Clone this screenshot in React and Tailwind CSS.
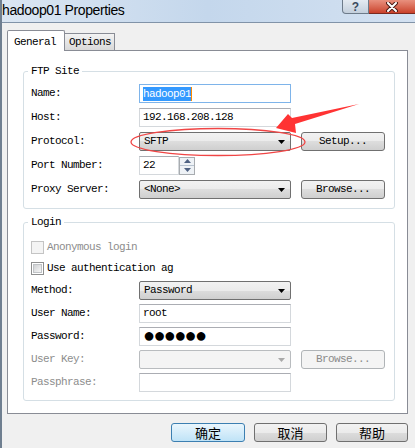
import React from "react";

// win7 style helpers
const mono = "font-['Liberation_Mono',monospace] text-[11px] tracking-[-0.6px]";

function Caret({ disabled }) {
  return (
    <svg width="7" height="4" viewBox="0 0 7 4">
      <path d="M0 0h7L3.5 4z" fill={disabled ? "#a9a9a9" : "#000"} />
    </svg>
  );
}

function Select({ value, disabled }) {
  return (
    <div
      className={
        disabled
          ? "flex items-center justify-between w-[152px] h-[19px] pl-[4px] pr-[5px] border border-[#b9bcbf] rounded-[2px] bg-[#f4f4f4]"
          : "flex items-center justify-between w-[152px] h-[19px] pl-[4px] pr-[5px] border border-[#707070] rounded-[2px] bg-[linear-gradient(#f2f2f2_0%,#ebebeb_50%,#dddddd_50%,#cfcfcf_100%)]"
      }
    >
      <span>{value}</span>
      <Caret disabled={disabled} />
    </div>
  );
}

function Input({ children, focused, w = "w-[152px]" }) {
  return (
    <div
      className={
        focused
          ? `flex items-center ${w} h-[19px] pl-[3px] border border-[#7eb4ea] bg-white`
          : `flex items-center ${w} h-[19px] pl-[3px] border border-[#d4d8dc] border-t-[#abadb3] bg-white`
      }
    >
      {children}
    </div>
  );
}

function Btn({ children, disabled }) {
  return (
    <div
      className={
        disabled
          ? "flex items-center justify-center w-[84px] h-[19px] ml-[10px] border border-[#b0b4b7] rounded-[3px] bg-[#f4f4f4] text-[#8a8a8a]"
          : "flex items-center justify-center w-[84px] h-[19px] ml-[10px] border border-[#707070] rounded-[3px] bg-[linear-gradient(#f2f2f2_0%,#ebebeb_50%,#dddddd_50%,#cfcfcf_100%)]"
      }
    >
      {children}
    </div>
  );
}

function Row({ label, disabled, children }) {
  return (
    <div className="flex items-center h-[19px]">
      <span className={disabled ? "w-[108px] text-[#8d8d8d]" : "w-[108px]"}>{label}</span>
      {children}
    </div>
  );
}

function Check({ label, disabled }) {
  return (
    <div className="flex items-center h-[19px] gap-[3px]">
      <span
        className={
          disabled
            ? "flex items-center justify-center w-[13px] h-[13px] border border-[#c4c4c4] bg-[#f4f4f4]"
            : "flex items-center justify-center w-[13px] h-[13px] border border-[#8e8f8f] bg-white"
        }
      >
        {!disabled && (
          <span className="w-[9px] h-[9px] border border-[#c0c3c6] bg-linear-to-br from-[#cfd1d3] to-[#f6f6f6]" />
        )}
      </span>
      <span className={disabled ? "text-[#8d8d8d]" : ""}>{label}</span>
    </div>
  );
}

function Spin() {
  return (
    <div className="flex flex-col w-[16px] h-[18px] border border-[#a8acb0] bg-[#eef2f6]">
      <div className="flex flex-1 items-center justify-center border-b border-[#b7c3d0]">
        <svg width="7" height="4" viewBox="0 0 7 4">
          <path d="M0 4h7L3.5 0z" fill="#4e6182" />
        </svg>
      </div>
      <div className="flex flex-1 items-center justify-center">
        <svg width="7" height="4" viewBox="0 0 7 4">
          <path d="M0 0h7L3.5 4z" fill="#4e6182" />
        </svg>
      </div>
    </div>
  );
}

export default function App() {
  return (
    <div className="relative w-[415px] h-[448px] overflow-hidden bg-[#f0f0f0] border-l-2 border-[#6f7f90] text-black">
      {/* title bar */}
      <div className="flex justify-between items-start h-[23px] -ml-[2px] bg-linear-to-r from-[#dbe6f2] via-[#c4d7ec] to-[#d3e1f1] border-b border-[#8193a8]">
        <span className="pl-[2px] pt-[2px] font-['Liberation_Sans',sans-serif] text-[14px] tracking-[-0.4px] leading-[16px]">
          hadoop01 Properties
        </span>
        <div className="flex">
          <div className="flex items-center justify-center w-[27px] h-[14px] border border-t-0 border-[#6d7b8a] rounded-bl-[4px] bg-linear-to-b from-[#e4eaf1] to-[#c3cfdc] font-['Liberation_Sans',sans-serif] font-bold text-[12px] leading-none text-[#3b4b5e]">
            ?
          </div>
          <div className="flex items-center justify-center w-[46px] h-[14px] border-b border-[#7a2a20] bg-linear-to-b from-[#e8907e] to-[#c9402a]">
            <svg width="12" height="10" viewBox="0 0 12 10">
              <path d="M2 1l8 8M10 1l-8 8" stroke="#4a1a14" strokeWidth="4" strokeLinecap="round" />
              <path d="M2 1l8 8M10 1l-8 8" stroke="#fff" strokeWidth="2" strokeLinecap="round" />
            </svg>
          </div>
        </div>
      </div>

      <div className={`flex flex-col pt-[7px] ${mono}`}>
        {/* tabs */}
        <div className="flex items-end h-[20px] ml-[5px]">
          <div className="relative z-10 -mb-px flex items-start w-[58px] h-[21px] pl-[6px] pt-[3px] border border-b-0 border-[#898c95] rounded-t-[2px] bg-white">
            General
          </div>
          <div className="flex items-center w-[51px] h-[17px] -ml-px pl-[4px] border border-b-0 border-[#898c95] bg-linear-to-b from-[#f3f3f3] to-[#d9d9d9]">
            Options
          </div>
        </div>

        {/* panel */}
        <div className="w-[401px] h-[364px] ml-[5px] pt-[13px] pl-[15px] pr-[12px] border border-[#898c95] bg-white">
          <fieldset className="flex flex-col gap-[5px] pl-[7px] pt-[6px] pb-[9px] border border-[#d5dfe5] rounded-[3px]">
            <legend className="-ml-[3px] px-[3px] leading-[14px]">FTP Site</legend>
            <Row label="Name:">
              <Input focused>
                <span className="bg-[#3399ff] text-white leading-[14px]">hadoop01</span>
                <span className="w-[1px] h-[14px] bg-[#ff8a00]" />
              </Input>
            </Row>
            <Row label="Host:">
              <Input>192.168.208.128</Input>
            </Row>
            <Row label="Protocol:">
              <Select value="SFTP" />
              <Btn>Setup...</Btn>
            </Row>
            <Row label="Port Number:">
              <Input w="w-[40px]">22</Input>
              <Spin />
            </Row>
            <Row label="Proxy Server:">
              <Select value="<None>" />
              <Btn>Browse...</Btn>
            </Row>
          </fieldset>

          <fieldset className="flex flex-col mt-[6px] pl-[7px] pt-[9px] pb-[8px] border border-[#d5dfe5] rounded-[3px]">
            <legend className="-ml-[3px] px-[3px] leading-[14px]">Login</legend>
            <Check label="Anonymous login" disabled />
            <div className="mt-[2px]">
              <Check label="Use authentication ag" />
            </div>
            <div className="flex flex-col gap-[4px] mt-[3px]">
              <Row label="Method:">
                <Select value="Password" />
              </Row>
              <Row label="User Name:">
                <Input>root</Input>
              </Row>
              <Row label="Password:">
                <Input>
                  <span className="font-['Liberation_Mono',monospace] text-[20px] leading-none tracking-[-1.6px]">
                    ●●●●●●
                  </span>
                </Input>
              </Row>
              <Row label="User Key:" disabled>
                <Select value="" disabled />
                <Btn disabled>Browse...</Btn>
              </Row>
              <Row label="Passphrase:" disabled>
                <Input />
              </Row>
            </div>
          </fieldset>
        </div>

        {/* dialog buttons */}
        <div className="flex justify-end gap-[9px] mt-[9px] pr-[7px] font-['Noto_Sans_CJK_SC',sans-serif] text-[13px] tracking-normal leading-none">
          <div className="flex items-center justify-center w-[74px] h-[19px] border border-[#3c7fb1] rounded-[3px] bg-linear-to-b from-[#eaf6fd] to-[#bfe3f7]">
            确定
          </div>
          <div className="flex items-center justify-center w-[73px] h-[19px] border border-[#707070] rounded-[3px] bg-[linear-gradient(#f2f2f2_0%,#ebebeb_50%,#dddddd_50%,#cfcfcf_100%)]">
            取消
          </div>
          <div className="flex items-center justify-center w-[72px] h-[19px] border border-[#707070] rounded-[3px] bg-[linear-gradient(#f2f2f2_0%,#ebebeb_50%,#dddddd_50%,#cfcfcf_100%)]">
            帮助
          </div>
        </div>
      </div>

      {/* red annotation */}
      <svg className="absolute top-0 left-0 pointer-events-none" width="415" height="448" viewBox="0 0 415 448">
        <ellipse cx="216" cy="142" rx="87" ry="13.5" fill="none" stroke="#f04545" strokeWidth="1.3" />
        <path d="M274 128L286 114L290 118L357 104L293 124L294 133Z" fill="#ff3333" />
      </svg>
    </div>
  );
}
